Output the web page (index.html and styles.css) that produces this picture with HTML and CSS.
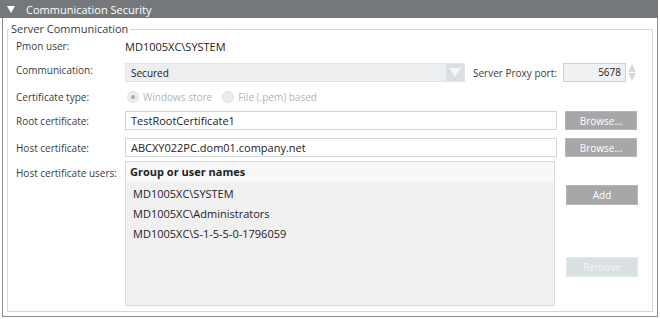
FILE: index.html
```html
<!DOCTYPE html>
<html lang="en">

<head>
    <meta charset="UTF-8">
    <title>Communication Security</title>
    <link rel="stylesheet" href="styles.css">
</head>

<body>
    <div class="panel">
        <header class="panel-header">
            <span class="caret"></span>
            <span class="panel-title">Communication Security</span>
        </header>
        <div class="panel-body">
            <fieldset class="group">
                <legend>Server Communication</legend>

                <div class="row row-pmon">
                    <label class="field-label">Pmon user:</label>
                    <span class="value">MD1005XC\SYSTEM</span>
                </div>

                <div class="row row-comm">
                    <label class="field-label">Communication:</label>
                    <div class="dropdown">
                        <span class="dropdown-text">Secured</span>
                        <span class="dropdown-arrow"><span class="tri"></span></span>
                    </div>
                    <label class="port-label">Server Proxy port:</label>
                    <div class="spin">
                        <span class="spin-box">5678</span>
                        <span class="spin-arrows">
                            <span class="spin-up"></span>
                            <span class="spin-down"></span>
                        </span>
                    </div>
                </div>

                <div class="row row-type">
                    <label class="field-label">Certificate type:</label>
                    <div class="radios">
                        <span class="radio checked"></span><span class="radio-text">Windows store</span>
                        <span class="radio"></span><span class="radio-text">File (.pem) based</span>
                    </div>
                </div>

                <div class="row row-input">
                    <label class="field-label">Root certificate:</label>
                    <div class="text-input">TestRootCertificate1</div>
                    <button class="btn">Browse...</button>
                </div>

                <div class="row row-input row-host">
                    <label class="field-label">Host certificate:</label>
                    <div class="text-input">ABCXY022PC.dom01.company.net</div>
                    <button class="btn">Browse...</button>
                </div>

                <div class="row row-users">
                    <label class="field-label">Host certificate users:</label>
                    <div class="list">
                        <div class="list-head">Group or user names</div>
                        <div class="list-body">
                            <div class="list-item">MD1005XC\SYSTEM</div>
                            <div class="list-item">MD1005XC\Administrators</div>
                            <div class="list-item">MD1005XC\S-1-5-5-0-1796059</div>
                        </div>
                    </div>
                    <div class="list-buttons">
                        <button class="btn btn-add">Add</button>
                        <button class="btn btn-disabled">Remove</button>
                    </div>
                </div>
            </fieldset>
        </div>
    </div>
</body>

</html>
```

FILE: styles.css
```css
body {
    margin: 0;
    padding: 0;
    background: #fff;
    font-family: "Open Sans", "Noto Sans", sans-serif;
    font-size: 10px;
    color: #3c3c3c;
}

.panel {
    width: 658px;
}

.panel-header {
    height: 18px;
    background: #74787b;
    color: #fff;
    display: flex;
    align-items: center;
    padding-left: 7px;
}

.caret {
    width: 0;
    height: 0;
    border-left: 4px solid transparent;
    border-right: 4px solid transparent;
    border-top: 7px solid #fff;
    margin-right: 11px;
    margin-top: 1px;
}

.panel-title {
    font-size: 11px;
}

.panel-body {
    margin-left: 2px;
    border: 1px solid #8c8c8c;
    border-top: none;
    padding: 0 4px 4px 4px;
    box-sizing: border-box;
    height: 299px;
    display: flex;
    flex-direction: column;
}

.group {
    margin: 4px 0 0 0;
    flex: 1;
    border: 1px solid #d6d6d6;
    padding: 0 8px;
    min-width: 0;
}

.group legend {
    padding: 0 2px 0 2px;
    margin-left: -7px;
    font-size: 11px;
    line-height: 14px;
    color: #3a3a3a;
}

.row {
    display: flex;
    align-items: center;
}

.field-label {
    width: 109px;
    flex-shrink: 0;
}

.value {
    font-size: 11px;
    color: #222;
}

.row-pmon {
    height: 18px;
    margin-top: 1px;
}

.row-comm {
    height: 19px;
    margin-top: 8px;
}

.row-comm .field-label {
    align-self: flex-start;
}

.dropdown {
    width: 340px;
    height: 19px;
    box-sizing: border-box;
    background: #eceeef;
    border: 1px solid #e0e4e6;
    display: flex;
    align-items: center;
}

.dropdown-text {
    flex: 1;
    padding-left: 5px;
    color: #222;
}

.dropdown-arrow {
    width: 18px;
    height: 100%;
    background: #d9dfe2;
    display: flex;
    align-items: center;
    justify-content: center;
}

.tri {
    width: 0;
    height: 0;
    border-left: 6px solid transparent;
    border-right: 6px solid transparent;
    border-top: 9px solid #f4f6f7;
}

.port-label {
    margin-left: 8px;
    width: 90px;
}

.spin {
    display: flex;
    align-items: center;
}

.spin-box {
    width: 63px;
    height: 19px;
    box-sizing: border-box;
    background: #eff1f2;
    border: 1px solid #c6d2d8;
    text-align: right;
    padding-right: 4px;
    line-height: 17px;
    color: #222;
}

.spin-arrows {
    margin-left: 2px;
    display: flex;
    flex-direction: column;
    gap: 1px;
}

.spin-up,
.spin-down {
    width: 0;
    height: 0;
    border-left: 4px solid transparent;
    border-right: 4px solid transparent;
}

.spin-up {
    border-bottom: 8px solid #d4dce0;
}

.spin-down {
    border-top: 8px solid #d4dce0;
}

.row-type {
    height: 18px;
    margin-top: 6px;
}

.radios {
    display: flex;
    align-items: center;
    color: #b4b4b4;
}

.radio {
    width: 12px;
    height: 12px;
    box-sizing: border-box;
    border-radius: 50%;
    background: #ececec;
    border: 1px solid #e2e2e2;
    margin-left: 2px;
    margin-right: 4px;
    display: flex;
    align-items: center;
    justify-content: center;
}

.radio.checked::after {
    content: "";
    width: 4px;
    height: 4px;
    border-radius: 50%;
    background: #a8a8a8;
}

.radio-text {
    margin-right: 8px;
}

.row-input {
    height: 19px;
    margin-top: 5px;
}

.row-host {
    margin-top: 8px;
}

.text-input {
    width: 432px;
    height: 19px;
    box-sizing: border-box;
    border: 1px solid #cdd5da;
    background: #fff;
    padding-left: 5px;
    line-height: 17px;
    font-size: 11px;
    color: #222;
}

.btn {
    width: 72px;
    height: 19px;
    margin-left: 8px;
    padding: 0;
    border: 1px solid #b6b6b6;
    background: #a7a7a7;
    color: #fff;
    font-family: inherit;
    font-size: 10px;
}

.row-users {
    align-items: flex-start;
    margin-top: 4px;
}

.row-users .field-label {
    margin-top: 5px;
}

.list {
    width: 430px;
    height: 145px;
    box-sizing: border-box;
    border: 1px solid #dadada;
    background: #f0f0f0;
    display: flex;
    flex-direction: column;
}

.list-head {
    height: 20px;
    line-height: 19px;
    background: #f8f8f8;
    padding-left: 4px;
    font-weight: bold;
    font-size: 11px;
    color: #222;
}

.list-body {
    padding-top: 2px;
}

.list-item {
    height: 20px;
    line-height: 20px;
    padding-left: 7px;
    font-size: 11px;
    color: #222;
}

.list-buttons {
    margin-left: 3px;
    display: flex;
    flex-direction: column;
}

.btn-add {
    margin-top: 24px;
    height: 20px;
}

.btn-disabled {
    margin-top: 52px;
    height: 20px;
    background: #d8e0e3;
    border-color: #e2e8ea;
    color: #f3f6f7;
}
```
